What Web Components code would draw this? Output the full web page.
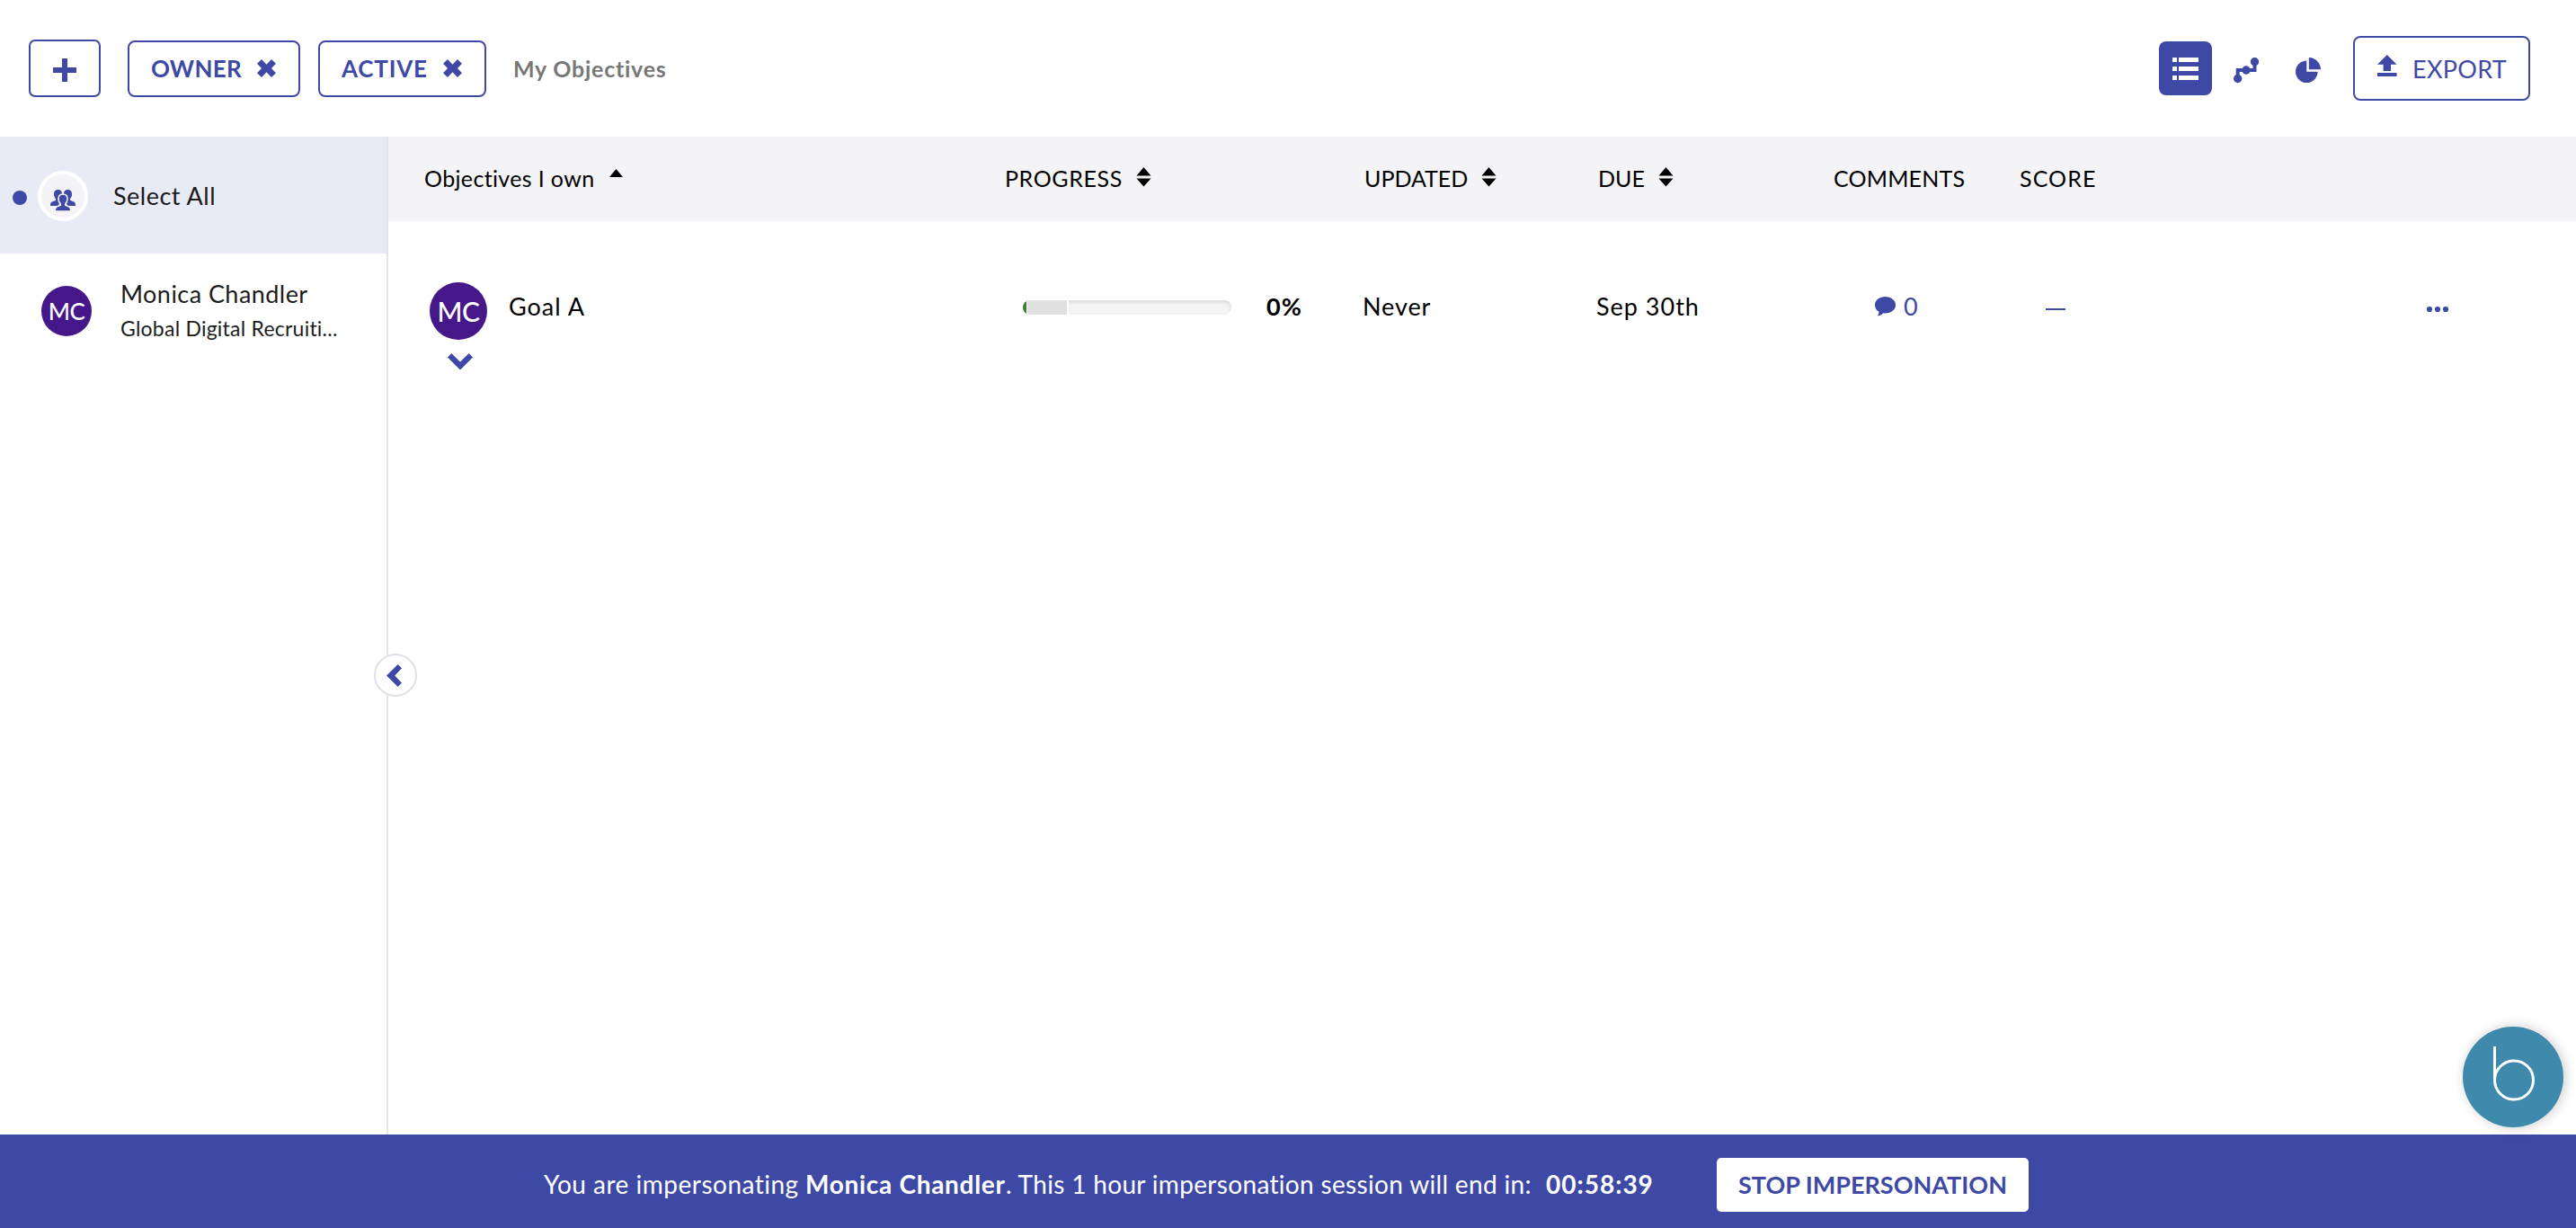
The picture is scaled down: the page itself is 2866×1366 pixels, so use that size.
<!DOCTYPE html>
<html lang="en">
<head>
<meta charset="utf-8">
<title>My Objectives</title>
<style>
    body { margin: 0; font-family: Lato, "Liberation Sans", sans-serif; font-variant-ligatures: none; color: #000; background: #fff; }
</style>
</head>
<body>
<objectives-app></objectives-app>
<script>
const ICONS = {
    plus: '<path d="M10 0h6v10H26v6H16V26h-6V16H0v-6h10z"/>',
    close: '<path d="M5 0l5.500 5.700L16 0l5 4.800L16 10l5 5.200L16 20l-5.500-5.700L5 20l-5-4.800L5 10 0 4.800z"/>',
    list: '<path d="M0 0h5v5H0zM7 0h22v5H7zM0 10h5v5H0zM7 10h22v5H7zM0 20h5v5H0zM7 20h22v5H7z"/>',
    steps: '<path d="M4.700 23V14H23.500V5" fill="none" stroke="currentColor" stroke-width="4"/><circle cx="4.700" cy="23.500" r="4.700"/><circle cx="14" cy="14" r="4.700"/><circle cx="23.500" cy="4.700" r="4.700"/>',
    pie: '<path d="M12.300 3.400V15.700H24.600A12.300 12.300 0 1 1 12.300 3.400z"/><path d="M14.800 0A13.300 13.300 0 0 1 28 13.200H14.800z"/>',
    upload: '<path d="M10.800 0L21.600 10.800H15V18H6.600V10.800H0zM0 20h21.600v4H0z"/>',
    users: '<path d="M8.500 1C12 1 13 3.500 13 6c0 2.300-1 4.200-2 5.200v2l-2 5.800H0c0-3 .5-4 2.500-4.700L6 12.800v-1.600C5 10.200 4 8.300 4 6c0-2.500 1-5 4.500-5z"/><path d="M19.500 1C16 1 15 3.500 15 6c0 2.300 1 4.200 2 5.200v2l2 5.800h9c0-3-.5-4-2.500-4.700L22 12.800v-1.600c1-1 2-2.900 2-5.200 0-2.500-1-5-4.500-5z"/><path d="M14 6c3.600 0 5 2.400 5 5.200 0 2.300-1 4.300-2.200 5.300v1.700l3.700 1.500c1.800.7 2.300 1.800 2.300 5.300H5.200c0-3.500.5-4.600 2.300-5.300l3.700-1.500v-1.700C10 15.500 9 13.500 9 11.200 9 8.400 10.400 6 14 6z" stroke="#f4f4f7" stroke-width="1.600"/>',
    up: '<path d="M7.500 0L15 9H0z"/>',
    sort: '<path d="M7.500 0L15.500 9.500H-.5zM-.5 12.500h16L7.500 21.500z"/>',
    down: '<path d="M4.300 0L14 9.600 23.700 0 28 4.400 14 18.500 0 4.400z"/>',
    left: '<path d="M12.700 0L17 4.300 9.300 12.500 17 20.700 12.700 25 0 12.500z"/>',
    comment: '<path d="M11.500 0C18 0 23 4 23 9.200s-5 9.300-11.500 9.300c-.8 0-1.500 0-2.200-.2C7.500 20.200 5.500 21.200 2.700 21.500c1-1.300 1.700-2.600 1.800-4.700C1.700 15.200 0 12.500 0 9.200 0 4 5 0 11.500 0z"/>',
    dots: '<circle cx="3" cy="3" r="3.100"/><circle cx="12" cy="3" r="3.100"/><circle cx="21" cy="3" r="3.100"/>'
};

function define(name, html, setup) {
    customElements.define(name, class extends HTMLElement {
        constructor() {
            super();
            this.attachShadow({ mode: 'open' });
        }
        connectedCallback() {
            this.shadowRoot.innerHTML = html;
            if (setup) setup(this, this.shadowRoot);
        }
    });
}

define('ui-icon', `
    <style>:host { display: block; flex: none; } svg { display: block; overflow: visible; fill: currentColor; }</style>
    <svg></svg>`, (el, root) => {
    const svg = root.querySelector('svg');
    svg.setAttribute('width', el.getAttribute('w'));
    svg.setAttribute('height', el.getAttribute('h'));
    svg.innerHTML = ICONS[el.getAttribute('name')];
});

// Single line of text: size in px, weight, tracking in px
define('ui-text', `
    <style>:host { display: block; flex: none; white-space: nowrap; }</style>
    <slot></slot>`, el => {
    el.style.fontSize = (el.getAttribute('size') || 27) + 'px';
    el.style.fontWeight = el.getAttribute('weight') || 400;
    el.style.letterSpacing = (el.getAttribute('track') || 0) + 'px';
});

define('ui-avatar', `
    <style>
        :host { display: flex; flex: none; align-items: center; justify-content: center; border-radius: 50%; background: #451789; color: #fff; }
    </style>
    <slot></slot>`, el => {
    el.style.width = el.style.height = el.getAttribute('size') + 'px';
});

define('filter-chip', `
    <style>
        :host { display: flex; align-items: center; justify-content: space-between; box-sizing: border-box; height: 63px; padding: 0 25px 0 24px; border: 2px solid #3e49a5; border-radius: 8px; color: #3e49a5; }
    </style>
    <slot></slot><ui-icon name="close" w="21" h="20"></ui-icon>`);

define('top-bar', `
    <style>
        :host { display: flex; align-items: center; justify-content: space-between; box-sizing: border-box; height: 152px; padding: 0 51px 0 32px; color: #3e49a5; }
        div { display: flex; align-items: center; }
        .add { box-sizing: border-box; width: 80px; height: 64px; justify-content: center; border: 2px solid; border-radius: 7px; margin-right: 30px; padding-top: 4px; }
        .owner { width: 192px; margin-right: 20px; }
        .active { width: 187px; margin-right: 30px; }
        .grey { color: #777; }
        .current { width: 59px; height: 60px; justify-content: center; border-radius: 8px; background: #3e49a5; color: #fff; margin-right: 24px; }
        .steps { margin-right: 41px; padding-top: 3px; }
        .pie { margin-right: 36px; padding-top: 3px; }
        .export { box-sizing: border-box; width: 197px; height: 72px; border: 2px solid; border-radius: 8px; padding: 0 24px 0 25px; justify-content: space-between; }
        .export ui-icon { margin-top: -6px; }
    </style>
    <div>
        <div class="add"><ui-icon name="plus" w="26" h="26"></ui-icon></div>
        <filter-chip class="owner"><ui-text size="26" weight="700" track="0.25">OWNER</ui-text></filter-chip>
        <filter-chip class="active"><ui-text size="26" weight="700" track="0.8">ACTIVE</ui-text></filter-chip>
        <ui-text class="grey" size="25" weight="700" track="0.75">My Objectives</ui-text>
    </div>
    <div>
        <div class="current"><ui-icon name="list" w="29" h="25"></ui-icon></div>
        <ui-icon class="steps" name="steps" w="28" h="28"></ui-icon>
        <ui-icon class="pie" name="pie" w="28" h="28"></ui-icon>
        <div class="export"><ui-icon name="upload" w="22" h="24"></ui-icon><ui-text track="0.3">EXPORT</ui-text></div>
    </div>`);

define('people-list', `
    <style>
        :host { display: block; position: relative; box-sizing: border-box; width: 432px; border-right: 2px solid #e4e4eb; color: #1c1c1c; }
        .all { display: flex; align-items: center; height: 130px; padding-left: 14px; padding-top: 2px; box-sizing: border-box; background: #e8eaf6; }
        .all > ui-text { margin-bottom: 2px; }
        .dot { width: 16px; height: 16px; border-radius: 50%; background: #3e49a5; margin: 4px 12px 0 0; }
        .group { display: flex; align-items: center; justify-content: center; box-sizing: border-box; width: 56px; height: 56px; border: 4px solid #fff; border-radius: 50%; background: #f4f4f7; color: #3e49a5; margin-right: 28px; padding-top: 8px; }
        .person { display: flex; align-items: center; height: 128px; padding-left: 46px; }
        .lines { margin-left: 32px; line-height: 38px; }
        .collapse { position: absolute; left: 416px; top: 575px; display: flex; align-items: center; justify-content: center; box-sizing: border-box; width: 48px; height: 48px; padding-right: 3px; border: 2px solid #e0e0e8; border-radius: 50%; background: #fff; color: #3e49a5; }
    </style>
    <div class="all">
        <div class="dot"></div>
        <div class="group"><ui-icon name="users" w="28" h="25"></ui-icon></div>
        <ui-text track="0.5">Select All</ui-text>
    </div>
    <div class="person">
        <ui-avatar size="56"><ui-text size="26" weight="500" track="-0.5">MC</ui-text></ui-avatar>
        <div class="lines">
            <ui-text track="0.45">Monica Chandler</ui-text>
            <ui-text size="23" track="0.23">Global Digital Recruiti...</ui-text>
        </div>
    </div>
    <div class="collapse"><ui-icon name="left" w="17" h="25"></ui-icon></div>`);

define('goal-table', `
    <style>
        :host { display: block; flex: 1; }
        .row { display: grid; grid-template-columns: 685px 400px 260px 263px 207px 443px 1fr; }
        .head { height: 94px; box-sizing: border-box; padding-bottom: 3px; background: #f4f4f7; }
        .goal { padding-top: 68px; }
        .row > div { display: flex; align-items: center; }
        .head > div { padding-left: 1px; }
        .head > .title { padding-left: 40px; }
        .goal > div { height: 53px; }
        .goal > .name { height: auto; align-items: flex-start; padding-left: 46px; }
        .who { display: flex; flex-direction: column; align-items: center; gap: 15px; margin-right: 24px; }
        .who ui-icon { margin-left: 4px; }
        .name > ui-text { line-height: 53px; }
        .blue { color: #3e49a5; }
        .sort { margin: 0 0 3px 16px; }
        .first { margin: -11px 0 0 17px; }
        .pull { margin-left: -1px; }
        .bar { display: flex; width: 232px; height: 16px; border-radius: 8px; overflow: hidden; background: #f4f4f4; box-shadow: inset 0 2px 4px rgba(0, 0, 0, .12); margin: 3px 39px 0 21px; }
        .done { width: 4px; background: #3f7f35; border-right: 1px solid #fff; }
        .expected { width: 44px; background: #e0e0e0; border-right: 2px solid #fff; }
        .comments { padding-left: 46px; }
        .comments ui-text { margin-left: 9px; }
        .dash { width: 22px; height: 2px; background: #3e49a5; margin: 7px 0 0 29px; }
        .more { box-sizing: border-box; padding: 6px 0 0 10px; }
    </style>
    <div class="row head">
        <div class="title"><ui-text size="25" track="0.35">Objectives I own</ui-text><ui-icon class="first" name="up" w="15" h="9"></ui-icon></div>
        <div><ui-text size="25" track="0.6">PROGRESS</ui-text><ui-icon class="sort" name="sort" w="15" h="21"></ui-icon></div>
        <div><ui-text size="25">UPDATED</ui-text><ui-icon class="sort" name="sort" w="15" h="21"></ui-icon></div>
        <div><ui-text size="25">DUE</ui-text><ui-icon class="sort" name="sort" w="15" h="21"></ui-icon></div>
        <div><ui-text class="pull" size="25" track="0.2">COMMENTS</ui-text></div>
        <div><ui-text class="pull" size="25" track="1.1">SCORE</ui-text></div>
        <div></div>
    </div>
    <div class="row goal">
        <div class="name">
            <div class="who blue">
                <ui-avatar size="64"><ui-text size="30" weight="500" track="-0.5">MC</ui-text></ui-avatar>
                <ui-icon name="down" w="28" h="18"></ui-icon>
            </div>
            <ui-text track="1">Goal A</ui-text>
        </div>
        <div>
            <div class="bar"><div class="done"></div><div class="expected"></div></div>
            <ui-text size="27" weight="700" track="1.2">0%</ui-text>
        </div>
        <div><ui-text class="pull" track="0.9">Never</ui-text></div>
        <div><ui-text class="pull" track="1">Sep 30th</ui-text></div>
        <div class="blue comments"><ui-icon name="comment" w="23" h="21"></ui-icon><ui-text>0</ui-text></div>
        <div><div class="dash"></div></div>
        <div class="blue more"><ui-icon name="dots" w="24" h="6"></ui-icon></div>
    </div>`);

define('session-banner', `
    <style>
        :host { display: flex; align-items: center; box-sizing: border-box; height: 104px; padding: 6px 0 0 605px; background: #3e49a5; color: #fff; }
        .intro { width: 291px; }
        .name { width: 223px; }
        .rest { width: 601px; }
        .timer { width: 190px; }
        .stop { display: flex; align-items: center; justify-content: center; width: 347px; height: 60px; margin-top: 2px; border-radius: 5px; background: #fff; color: #3e49a5; }
        .stop ui-text { margin-bottom: 1px; }
    </style>
    <ui-text class="intro" size="28" track="0.5">You are impersonating</ui-text>
    <ui-text class="name" size="28" weight="700" track="0.7">Monica Chandler</ui-text>
    <ui-text class="rest" size="28" track="0.33">. This 1 hour impersonation session will end in:</ui-text>
    <ui-text class="timer" size="28" weight="700" track="1">00:58:39</ui-text>
    <div class="stop"><ui-text weight="700">STOP IMPERSONATION</ui-text></div>`);

define('help-bubble', `
    <style>
        :host { position: absolute; left: 2740px; top: 1142px; width: 112px; height: 112px; border-radius: 50%; background: #3f8aac; box-shadow: 2px 0 14px rgba(0, 0, 0, .2); }
        svg { display: block; }
    </style>
    <svg width="112" height="112" fill="none" stroke="#fff" stroke-width="3"><path d="M35.500 22v38"/><circle cx="57" cy="59.500" r="21.500"/></svg>`);

define('objectives-app', `
    <style>
        :host { display: flex; flex-direction: column; position: relative; height: 1366px; overflow: hidden; }
        main { display: flex; flex: 1; }
    </style>
    <top-bar></top-bar>
    <main><people-list></people-list><goal-table></goal-table></main>
    <help-bubble></help-bubble>
    <session-banner></session-banner>`);
</script>
</body>
</html>
